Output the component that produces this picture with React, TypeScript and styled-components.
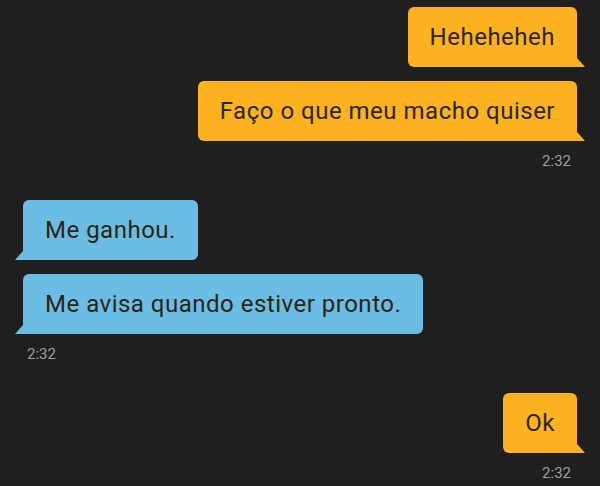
import React from "react";
import styled, { createGlobalStyle } from "styled-components";

const Global = createGlobalStyle`
  html, body { margin: 0; padding: 0; background: #1f1f1f; }
  body { font-family: Roboto, "DejaVu Sans", sans-serif; }
`;

const Page = styled.div`
  width: 600px;
  height: 486px;
  background: #1f1f1f;
  box-sizing: border-box;
  padding: 7px 23px 0 23px;
  display: flex;
  flex-direction: column;
  overflow: hidden;
`;

const Group = styled.div<{ $mine: boolean; $gap: number }>`
  display: flex;
  flex-direction: column;
  align-items: ${(p) => (p.$mine ? "flex-end" : "flex-start")};
  gap: 14px;
  margin-bottom: ${(p) => p.$gap}px;
`;

const Bubble = styled.div<{ $mine: boolean }>`
  position: relative;
  height: 60px;
  box-sizing: border-box;
  padding: 0 22px;
  display: flex;
  align-items: center;
  font-size: 24px;
  color: #2c2414;
  letter-spacing: 0.5px;
  background: ${(p) => (p.$mine ? "#fdb31f" : "#6cbde3")};
  border-radius: ${(p) => (p.$mine ? "6px 6px 0 6px" : "6px 6px 6px 0")};
  &::after {
    content: "";
    position: absolute;
    bottom: 0;
    ${(p) => (p.$mine ? "right: -8px;" : "left: -8px;")}
    width: 0;
    height: 0;
    border-bottom: 9px solid ${(p) => (p.$mine ? "#fdb31f" : "#6cbde3")};
    ${(p) =>
      p.$mine
        ? "border-right: 8px solid transparent;"
        : "border-left: 8px solid transparent;"}
  }
`;

const Time = styled.div<{ $mine: boolean }>`
  font-size: 15px;
  color: #9f9f9f;
  margin-top: -3px;
  ${(p) => (p.$mine ? "margin-right: 6px;" : "margin-left: 4px;")}
`;

const groups = [
  { mine: true, msgs: ["Heheheheh", "Faço o que meu macho quiser"], time: "2:32", gap: 30 },
  { mine: false, msgs: ["Me ganhou.", "Me avisa quando estiver pronto."], time: "2:32", gap: 30 },
  { mine: true, msgs: ["Ok"], time: "2:32", gap: 0 },
];

export default function App() {
  return (
    <>
      <Global />
      <Page>
        {groups.map((g, i) => (
          <Group key={i} $mine={g.mine} $gap={g.gap}>
            {g.msgs.map((m, j) => (
              <Bubble key={j} $mine={g.mine}>
                {m}
              </Bubble>
            ))}
            <Time $mine={g.mine}>{g.time}</Time>
          </Group>
        ))}
      </Page>
    </>
  );
}
